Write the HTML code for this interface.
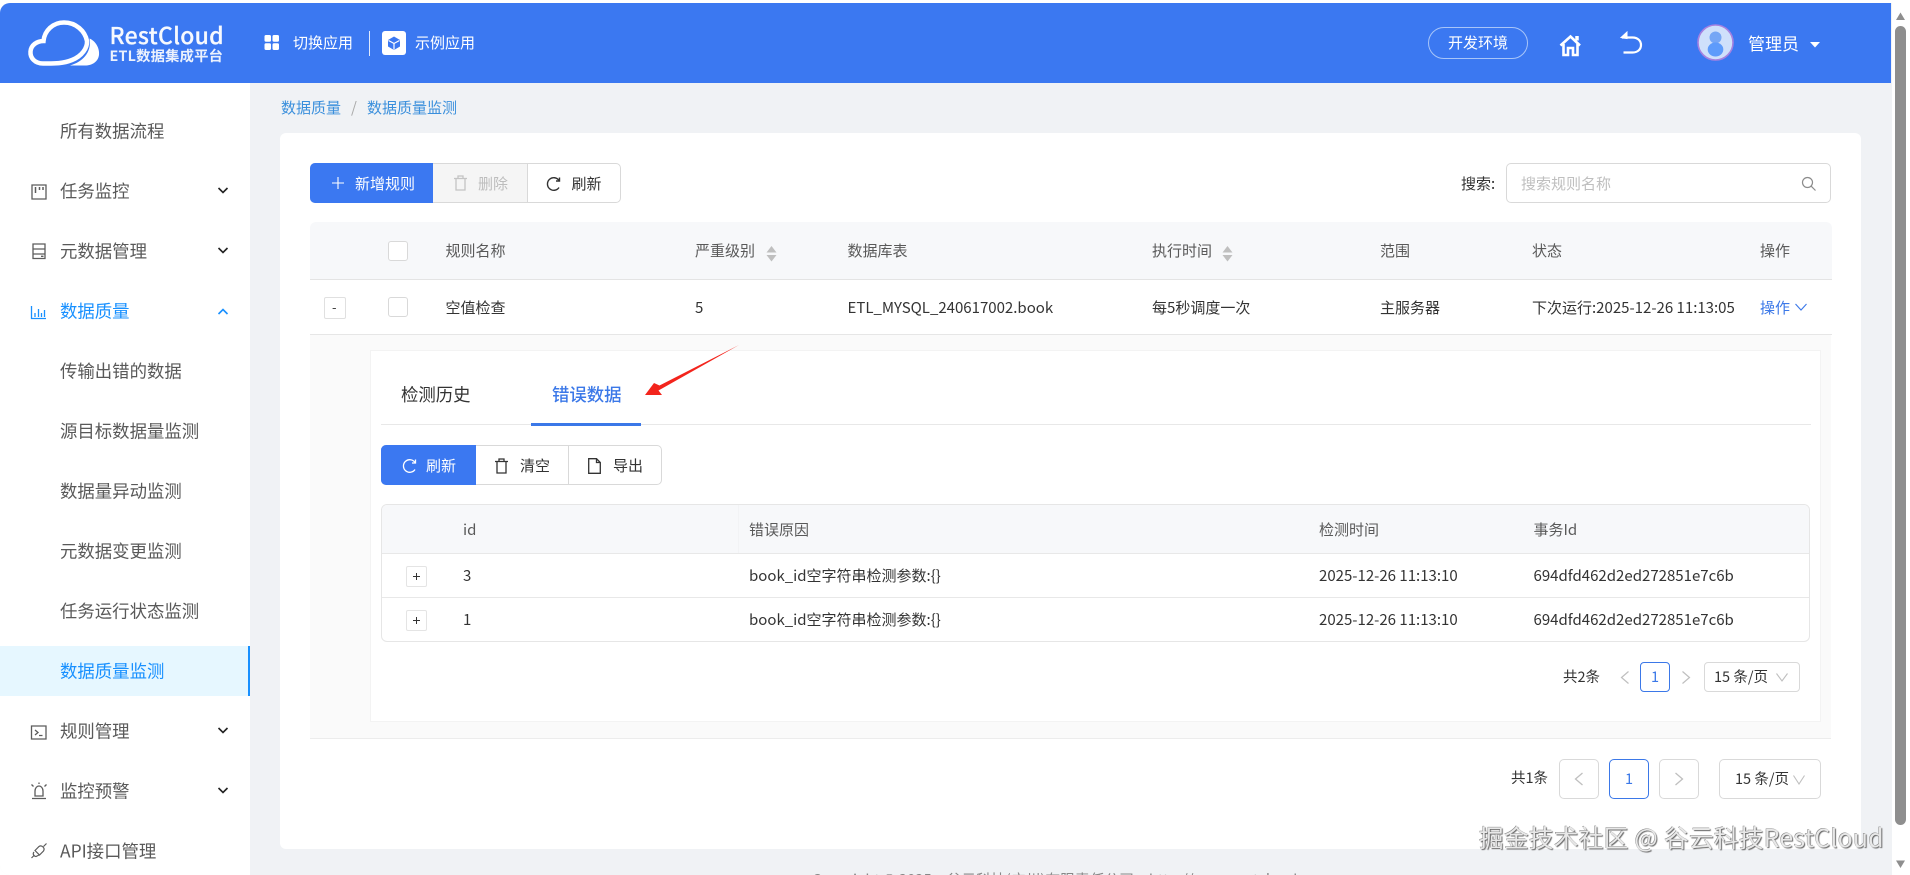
<!DOCTYPE html>
<html lang="zh"><head><meta charset="utf-8"><title>RestCloud</title>
<style>
html,body{margin:0;padding:0;width:1910px;height:875px;overflow:hidden;background:#fff}
body{position:relative;font-family:"Noto Sans CJK SC","Liberation Sans",sans-serif;color:#333;font-size:15px}
.a,.t,svg{position:absolute}
.a{box-sizing:border-box}
.t{white-space:nowrap;line-height:20px;height:20px}
.s{font-size:17.400px;color:#595959;left:60px;transform:translateY(.5px)}
.h{color:#595959}
.w{color:#fff}
.b{color:#3b78e8}
svg{overflow:visible}
</style></head><body>
<!-- page frame -->
<div class="a" style="left:0;top:3px;width:1892px;height:872px;background:#f0f2f5;border-radius:10px 0 0 10px;overflow:hidden"></div>
<div class="a" style="left:0;top:3px;width:1891px;height:80px;background:#3b78f1;border-radius:10px 0 0 0"></div>
<div class="a" style="left:0;top:83px;width:250px;height:792px;background:#fff;border-radius:0 0 0 10px"></div>

<!-- logo -->
<svg style="left:0;top:0" width="120" height="80" viewBox="0 0 120 80">
<path d="M43 63.500C35 63.500 30 58 30.500 51.500C31 45 37 41 43.500 41C44.500 30.500 53 22.500 64 22.500C76 22.500 85 31 87 41C87.500 48 82 56 72 60C62 64 53 63.500 43 63.500Z" fill="none" stroke="#fff" stroke-width="4.500"/>
<path d="M89.500 38.500C95.500 41 99.800 48 99 55C98 62 92 65.500 85 65.500L70 65.500C82 62 92 53 89.500 38.500Z" fill="#fff"/>
</svg>
<div class="t w" style="left:109.500px;top:23px;font-size:23px;line-height:22px;height:22px;font-weight:500;letter-spacing:.25px;-webkit-text-stroke:.2px #fff;opacity:.96">RestCloud</div>
<div class="t w" style="left:109.500px;top:46px;font-size:14.300px;font-weight:700;letter-spacing:.2px;opacity:.9">ETL数据集成平台</div>

<!-- app switch -->
<svg style="left:264px;top:35px" width="16" height="16" viewBox="0 0 16 16" fill="#fff"><rect x="0.500" width="6.500" height="6.800" rx="1.500"/><rect x="8.500" width="6.500" height="6.800" rx="1.500"/><rect x="0.500" y="8.200" width="6.500" height="6.800" rx="1.500"/><rect x="8.500" y="8.200" width="6.500" height="6.800" rx="1.500"/></svg>
<div class="t w" style="left:293px;top:33px">切换应用</div>
<div class="a" style="left:369px;top:31px;width:1px;height:25px;background:#dfe9fd"></div>
<svg style="left:382px;top:31px" width="24" height="24" viewBox="0 0 24 24"><rect width="24" height="24" rx="3" fill="#fff"/><path d="M12 5.500L18 9V15.500L12 19L6 15.500V9Z" fill="#3b78f1"/><path d="M6.500 9.500L12 12.500L17.500 9.500M12 12.500V18.500" stroke="#fff" stroke-width="1.200" fill="none"/></svg>
<div class="t w" style="left:415px;top:33px">示例应用</div>

<!-- header right -->
<div class="a" style="left:1428px;top:27px;width:100px;height:32px;border:1px solid #a8c5f8;border-radius:16px"></div>
<div class="t w" style="left:1448px;top:33px">开发环境</div>
<svg style="left:1559px;top:34px" width="23" height="23" viewBox="0 0 23 23" fill="none" stroke="#fff" stroke-width="2.600"><path d="M1.500 11.500L11.500 2.500L21 11.500"/><path d="M4.500 10V21H9V14H14V21H18.500V10"/><path d="M18 2V6.500" stroke-width="3.500"/></svg>
<svg style="left:1619px;top:31px" width="24" height="24" viewBox="0 0 24 24" fill="none" stroke="#fff" stroke-width="2.200"><path d="M3 6.500H13.500C19 6.500 22 10 22 14C22 18 19 21.500 13.500 21.500H4.500"/><path d="M8 1L2 6.500L8 7.500Z" fill="#fff" stroke-width="1"/></svg>
<svg style="left:1697px;top:24px" width="37" height="37" viewBox="0 0 37 37"><circle cx="18.500" cy="18.500" r="17.500" fill="#cfe0fb" stroke="#a681e0" stroke-width="1.600"/><circle cx="18.500" cy="13.500" r="6" fill="#76a6f5"/><ellipse cx="18.500" cy="25.500" rx="7.800" ry="7" fill="#5e9bfb"/></svg>
<div class="t w" style="left:1748px;top:33px;font-size:17px">管理员</div>
<svg style="left:1810px;top:42px" width="10" height="6"><path d="M0 0H10L5 5.500Z" fill="#fff"/></svg>

<!-- sidebar -->
<div class="t s" style="top:121px">所有数据流程</div>
<div class="t s" style="top:181px">任务监控</div>
<div class="t s" style="top:241px">元数据管理</div>
<div class="t s" style="top:301px;color:#1890ff">数据质量</div>
<div class="t s" style="top:361px">传输出错的数据</div>
<div class="t s" style="top:421px">源目标数据量监测</div>
<div class="t s" style="top:481px">数据量异动监测</div>
<div class="t s" style="top:541px">元数据变更监测</div>
<div class="t s" style="top:601px">任务运行状态监测</div>
<div class="a" style="left:0;top:646px;width:250px;height:50px;background:#e6f7ff;border-right:2.500px solid #1890ff"></div>
<div class="t s" style="top:661px;color:#1890ff">数据质量监测</div>
<div class="t s" style="top:721px">规则管理</div>
<div class="t s" style="top:781px">监控预警</div>
<div class="t s" style="top:841px">API接口管理</div>

<svg style="left:0;top:0" width="250" height="875" fill="none" stroke="#5c5c5c" stroke-width="1.300">
<path d="M32 185H46V199H32Z"/><path d="M35.500 187V193M39.500 187V190M43 187V190" stroke-width="1.500"/>
<path d="M33 244H45V258.500H33ZM33 249H45M33 254H45M41 256.300H43.500" />
<path d="M31.500 306V318.500H46M35 317V313M38.500 317V309M41.500 317V313M44.500 317V310" stroke="#1890ff"/>
<path d="M31.500 726H46V739H31.500ZM35 730L38 732.500L35 735M39 735.500H42.500"/>
<path d="M35 796V791C35 788 37 786 39 786C41 786 43 788 43 791V796ZM32 798.500H46M31.500 784.500L33.500 786.500M39 782.500V784M46.500 784.500L44.500 786.500"/>
<path d="M31.500 858L34.500 855M46.500 843.500L43.500 846.500M35 850.500L39 846.500C40.500 845.500 42 846 43 847C44 848 44.500 849.500 43.500 851L39.500 855Z" stroke-width="1.200"/>
<path d="M34 852C32.500 853.500 33.500 856.500 36 856.500L39 855" stroke-width="1.200"/>
<g stroke="#222" stroke-width="1.600">
<path d="M218.500 188L223 192.500L227.500 188M218.500 248L223 252.500L227.500 248M218.500 728L223 732.500L227.500 728M218.500 788L223 792.500L227.500 788"/>
<path d="M218.500 314L223 309.500L227.500 314" stroke="#1890ff"/>
</g>
</svg>

<!-- breadcrumb -->
<div class="t" style="left:281px;top:98px;color:#3a8fdc">数据质量</div>
<div class="t" style="left:351px;top:98px;color:#aaa">/</div>
<div class="t" style="left:367px;top:98px;color:#3a8fdc">数据质量监测</div>

<!-- card -->
<div class="a" style="left:280px;top:133px;width:1581px;height:716px;background:#fff;border-radius:6px"></div>

<!-- toolbar -->
<div class="a" style="left:310px;top:163px;width:311px;height:40px;background:#fff;border:1px solid #d9d9d9;border-radius:5px"></div>
<div class="a" style="left:433px;top:163px;width:95px;height:40px;background:#f5f5f5;border:1px solid #d9d9d9;border-left:0"></div>
<div class="a" style="left:310px;top:163px;width:123px;height:40px;background:#3b78f1;border-radius:5px 0 0 5px"></div>
<svg style="left:332px;top:177px" width="12" height="12" fill="none" stroke="#fff" stroke-width="1.100"><path d="M6 0V12M0 6H12"/></svg>
<div class="t w" style="left:355px;top:174px">新增规则</div>
<svg style="left:454px;top:175px" width="13" height="16" fill="none" stroke="#c4c4c4" stroke-width="1.300"><path d="M0 3.500H13M4 3.500V1H9V3.500M2 3.500V15H11V3.500"/></svg>
<div class="t" style="left:478px;top:174px;color:#bdbdbd">删除</div>
<svg style="left:546px;top:177px" width="14" height="14" fill="none" stroke="#333" stroke-width="1.400"><path d="M13 3.500A6.300 6.300 0 1 0 13 10.500"/><path d="M13.500 0.500V4H10" /></svg>
<div class="t" style="left:571.500px;top:174px">刷新</div>

<!-- search -->
<div class="t" style="left:1461px;top:174px">搜索:</div>
<div class="a" style="left:1506px;top:163px;width:325px;height:40px;background:#fff;border:1px solid #d9d9d9;border-radius:5px"></div>
<div class="t" style="left:1521px;top:174px;color:#bfbfbf">搜索规则名称</div>
<svg style="left:1802px;top:177px" width="14" height="14" fill="none" stroke="#8c8c8c" stroke-width="1.200"><circle cx="5.500" cy="5.500" r="5"/><path d="M9.200 9.200L13.500 13.500"/></svg>

<!-- main table -->
<div class="a" style="left:310px;top:222px;width:1522px;height:58px;background:#f7f8fa;border-bottom:1px solid #e4e4e4;border-radius:6px 6px 0 0"></div>
<div class="a" style="left:310px;top:334px;width:1522px;height:1px;background:#e6e6e6"></div>
<div class="a" style="left:310px;top:335px;width:1521px;height:404px;background:#fafafa;border-bottom:1px solid #ececec"></div>
<div class="a" style="left:388px;top:241px;width:20px;height:20px;background:#fff;border:1px solid #d9d9d9;border-radius:3px"></div>
<div class="a" style="left:388px;top:297px;width:20px;height:20px;background:#fff;border:1px solid #d9d9d9;border-radius:3px"></div>
<div class="a" style="left:324px;top:297px;width:22px;height:22px;background:#fff;border:1px solid #e0e0e0;border-radius:2px"></div>
<div class="t" style="left:332px;top:297px;font-size:13px">-</div>

<div class="t h" style="left:445.500px;top:241px">规则名称</div>
<div class="t h" style="left:695px;top:241px">严重级别</div>
<div class="t h" style="left:847.500px;top:241px">数据库表</div>
<div class="t h" style="left:1152px;top:241px">执行时间</div>
<div class="t h" style="left:1380px;top:241px">范围</div>
<div class="t h" style="left:1532px;top:241px">状态</div>
<div class="t h" style="left:1760px;top:241px">操作</div>
<svg style="left:766px;top:246px" width="11" height="16" fill="#bfbfbf"><path d="M5.500 0L10.500 6.500H.5Z"/><path d="M.5 9H10.500L5.500 15.500Z"/></svg>
<svg style="left:1222px;top:246px" width="11" height="16" fill="#bfbfbf"><path d="M5.500 0L10.500 6.500H.5Z"/><path d="M.5 9H10.500L5.500 15.500Z"/></svg>

<div class="t" style="left:445.500px;top:298px">空值检查</div>
<div class="t" style="left:695px;top:298px">5</div>
<div class="t" style="left:847.500px;top:298px">ETL_MYSQL_240617002.book</div>
<div class="t" style="left:1152px;top:298px">每5秒调度一次</div>
<div class="t" style="left:1380px;top:298px">主服务器</div>
<div class="t" style="left:1532px;top:298px">下次运行:2025-12-26 11:13:05</div>
<div class="t b" style="left:1760px;top:298px">操作</div>
<svg style="left:1795px;top:303px" width="12" height="8" fill="none" stroke="#3b78e8" stroke-width="1.100"><path d="M.5 1L6 7L11.500 1"/></svg>

<!-- inner card -->
<div class="a" style="left:370px;top:350px;width:1451px;height:372px;background:#fff;border:1px solid #f3f3f3"></div>
<div class="a" style="left:381px;top:424px;width:1430px;height:1px;background:#e8e8e8"></div>
<div class="t" style="left:401px;top:385px;font-size:17.400px">检测历史</div>
<div class="t" style="left:552px;top:385px;font-size:17.400px;color:#3b78e8;font-weight:500">错误数据</div>
<div class="a" style="left:531px;top:423px;width:110px;height:3px;background:#3b78e8"></div>
<svg style="left:0;top:0" width="800" height="420"><path d="M739 345L659.500 385.500L654 383L645 395L662 395L658.500 390.500Z" fill="#f3241c"/></svg>

<div class="a" style="left:381px;top:445px;width:281px;height:40px;background:#fff;border:1px solid #d9d9d9;border-radius:5px"></div>
<div class="a" style="left:568px;top:445px;width:1px;height:40px;background:#d9d9d9"></div>
<div class="a" style="left:381px;top:445px;width:95px;height:40px;background:#3b78f1;border-radius:5px 0 0 5px"></div>
<svg style="left:402px;top:459px" width="14" height="14" fill="none" stroke="#fff" stroke-width="1.300"><path d="M13 3.500A6.300 6.300 0 1 0 13 10.500"/><path d="M13.500 .5V4H10"/></svg>
<div class="t w" style="left:426px;top:456px">刷新</div>
<svg style="left:495px;top:458px" width="13" height="16" fill="none" stroke="#333" stroke-width="1.300"><path d="M0 3.500H13M4 3.500V1H9V3.500M2 3.500V15H11V3.500"/></svg>
<div class="t" style="left:520px;top:456px">清空</div>
<svg style="left:588px;top:458px" width="13" height="16" fill="none" stroke="#333" stroke-width="1.300"><path d="M.7.7H8.500L12.300 4.500V15.300H.7ZM8.500.7V4.500H12.300"/></svg>
<div class="t" style="left:613px;top:456px">导出</div>

<!-- inner table -->
<div class="a" style="left:381px;top:504px;width:1429px;height:138px;background:#fff;border:1px solid #e6e6e6;border-radius:6px"></div>
<div class="a" style="left:382px;top:505px;width:1427px;height:49px;background:#f7f8fa;border-bottom:1px solid #e8e8e8;border-radius:5px 5px 0 0"></div>
<div class="a" style="left:382px;top:597px;width:1427px;height:1px;background:#e8e8e8"></div>
<div class="a" style="left:738px;top:505px;width:1px;height:48px;background:#f2f3f5"></div>
<div class="t h" style="left:463px;top:520px">id</div>
<div class="t h" style="left:749px;top:520px">错误原因</div>
<div class="t h" style="left:1319px;top:520px">检测时间</div>
<div class="t h" style="left:1533.500px;top:520px">事务Id</div>
<div class="a" style="left:406px;top:566px;width:21px;height:21px;background:#fff;border:1px solid #e4e4e4;border-radius:2px"></div>
<div class="a" style="left:406px;top:610px;width:21px;height:21px;background:#fff;border:1px solid #e4e4e4;border-radius:2px"></div>
<svg style="left:413px;top:573px" width="7" height="51" fill="none" stroke="#333"><path d="M3.500 0V7M0 3.500H7M3.500 44V51M0 47.500H7"/></svg>
<div class="t" style="left:463px;top:566px">3</div>
<div class="t" style="left:749px;top:566px">book_id空字符串检测参数:{}</div>
<div class="t" style="left:1319px;top:566px">2025-12-26 11:13:10</div>
<div class="t" style="left:1533.500px;top:566px">694dfd462d2ed272851e7c6b</div>
<div class="t" style="left:463px;top:610px">1</div>
<div class="t" style="left:749px;top:610px">book_id空字符串检测参数:{}</div>
<div class="t" style="left:1319px;top:610px">2025-12-26 11:13:10</div>
<div class="t" style="left:1533.500px;top:610px">694dfd462d2ed272851e7c6b</div>

<!-- inner pagination -->
<div class="t" style="left:1563px;top:667px;font-size:14.500px">共2条</div>
<svg style="left:1620px;top:671px" width="10" height="13" fill="none" stroke="#bfbfbf" stroke-width="1.200"><path d="M8.500 .5L1.500 6.500L8.500 12.500"/></svg>
<div class="a" style="left:1640px;top:662px;width:30px;height:30px;background:#fff;border:1px solid #3b78e8;border-radius:4px"></div>
<div class="t b" style="left:1640px;top:667px;width:30px;text-align:center;font-size:14.500px">1</div>
<svg style="left:1681px;top:671px" width="10" height="13" fill="none" stroke="#bfbfbf" stroke-width="1.200"><path d="M1.500 .5L8.500 6.500L1.500 12.500"/></svg>
<div class="a" style="left:1704px;top:662px;width:96px;height:30px;background:#fff;border:1px solid #d9d9d9;border-radius:4px"></div>
<div class="t" style="left:1714px;top:667px;font-size:14.500px">15 条/页</div>
<svg style="left:1776px;top:673px" width="12" height="9" fill="none" stroke="#bfbfbf" stroke-width="1.100"><path d="M.5 .5L6 8L11.500 .5"/></svg>

<!-- outer pagination -->
<div class="t" style="left:1511px;top:768px;font-size:14.500px">共1条</div>
<div class="a" style="left:1559px;top:759px;width:40px;height:40px;border:1px solid #d9d9d9;border-radius:5px"></div>
<svg style="left:1574px;top:772px" width="10" height="14" fill="none" stroke="#bfbfbf" stroke-width="1.300"><path d="M8.500 1L1.500 7L8.500 13"/></svg>
<div class="a" style="left:1609px;top:759px;width:40px;height:40px;border:1px solid #3b78e8;border-radius:5px"></div>
<div class="t b" style="left:1609px;top:769px;width:40px;text-align:center;font-size:14.500px">1</div>
<div class="a" style="left:1659px;top:759px;width:40px;height:40px;border:1px solid #d9d9d9;border-radius:5px"></div>
<svg style="left:1674px;top:772px" width="10" height="14" fill="none" stroke="#bfbfbf" stroke-width="1.300"><path d="M1.500 1L8.500 7L1.500 13"/></svg>
<div class="a" style="left:1719px;top:759px;width:102px;height:40px;border:1px solid #d9d9d9;border-radius:5px"></div>
<div class="t" style="left:1735px;top:769px;font-size:14.500px">15 条/页</div>
<svg style="left:1793px;top:775px" width="12" height="10" fill="none" stroke="#bfbfbf" stroke-width="1.100"><path d="M.5 .5L6 9L11.500 .5"/></svg>

<!-- footer -->
<div class="t" style="left:812px;top:870px;font-size:14.800px;color:#888">Copyright © 2025　谷云科技(广州)有限责任公司　http://www.restcloud.cn</div>

<!-- watermark -->
<div class="t" style="left:1479px;top:822px;font-size:24.600px;letter-spacing:.35px;line-height:30px;height:30px;color:#e8e8e8;text-shadow:1px 1px 1px #666,-.5px -.5px 0 #888">掘金技术社区 @ 谷云科技RestCloud</div>

<!-- scrollbar -->
<div class="a" style="left:1892px;top:0;width:18px;height:875px;background:#fff"></div>
<div class="a" style="left:1895px;top:26px;width:11px;height:799px;background:#8e8e8e;border-radius:5.500px"></div>
<svg style="left:1895px;top:12px" width="11" height="9"><path d="M5.500 .5L10 8H1Z" fill="#8e8e8e"/></svg>
<svg style="left:1895px;top:860px" width="11" height="9"><path d="M1 .5H10L5.500 8Z" fill="#8e8e8e"/></svg>
</body></html>
